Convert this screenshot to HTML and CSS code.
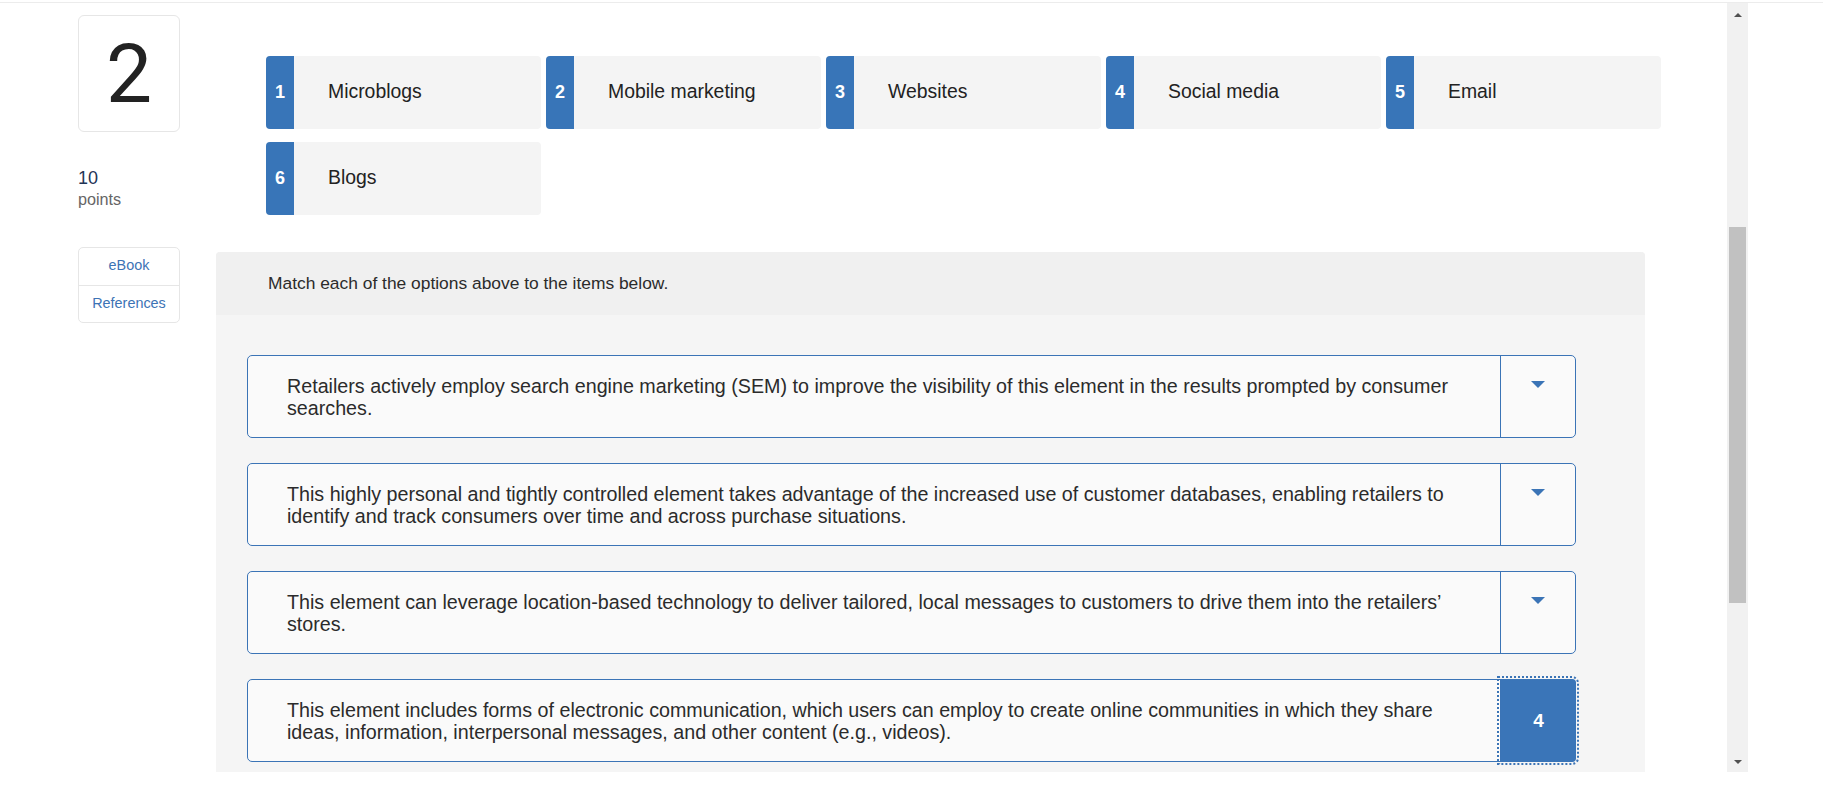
FILE: index.html
```html
<!DOCTYPE html>
<html lang="en">
<head>
<meta charset="utf-8">
<title>Matching question</title>
<link rel="stylesheet" href="styles.css">
</head>
<body>
<div class="topline"></div>
<div class="frame">
  <div class="content">
    <aside class="side">
      <div class="qnum">2</div>
      <div class="points">
        <div class="pts-val">10</div>
        <div class="pts-label">points</div>
      </div>
      <div class="links">
        <a class="link">eBook</a>
        <a class="link">References</a>
      </div>
    </aside>
    <main class="main">
      <div class="tiles">
        <div class="tile"><span class="tile-num">1</span><span class="tile-label">Microblogs</span></div>
        <div class="tile"><span class="tile-num">2</span><span class="tile-label">Mobile marketing</span></div>
        <div class="tile"><span class="tile-num">3</span><span class="tile-label">Websites</span></div>
        <div class="tile"><span class="tile-num">4</span><span class="tile-label">Social media</span></div>
        <div class="tile"><span class="tile-num">5</span><span class="tile-label">Email</span></div>
        <div class="tile"><span class="tile-num">6</span><span class="tile-label">Blogs</span></div>
      </div>
      <section class="panel">
        <div class="panel-head">Match each of the options above to the items below.</div>
        <div class="panel-body">
          <div class="row">
            <div class="row-text">Retailers actively employ search engine marketing (SEM) to improve the visibility of this element in the results prompted by consumer searches.</div>
            <div class="row-select"><svg class="caret" width="14" height="7" viewBox="0 0 14 7"><path d="M0 0H14L7 7Z" fill="#3b74b6"/></svg></div>
          </div>
          <div class="row">
            <div class="row-text">This highly personal and tightly controlled element takes advantage of the increased use of customer databases, enabling retailers to identify and track consumers over time and across purchase situations.</div>
            <div class="row-select"><svg class="caret" width="14" height="7" viewBox="0 0 14 7"><path d="M0 0H14L7 7Z" fill="#3b74b6"/></svg></div>
          </div>
          <div class="row">
            <div class="row-text">This element can leverage location-based technology to deliver tailored, local messages to customers to drive them into the retailers’ stores.</div>
            <div class="row-select"><svg class="caret" width="14" height="7" viewBox="0 0 14 7"><path d="M0 0H14L7 7Z" fill="#3b74b6"/></svg></div>
          </div>
          <div class="row">
            <div class="row-text">This element includes forms of electronic communication, which users can employ to create online communities in which they share ideas, information, interpersonal messages, and other content (e.g., videos).</div>
            <div class="row-select filled"><span class="chosen">4</span></div>
          </div>
        </div>
      </section>
    </main>
  </div>
  <div class="scrollbar">
    <div class="sb-btn"><span class="arrow-up"></span></div>
    <div class="sb-thumb"></div>
    <div class="sb-btn sb-bottom"><span class="arrow-down"></span></div>
  </div>
</div>
</body>
</html>
```

FILE: styles.css
```css
* { box-sizing: border-box; }

html, body {
  margin: 0;
  padding: 0;
  background: #ffffff;
}

body {
  font-family: "Liberation Sans", Arial, sans-serif;
  color: #2b2b2b;
  width: 1823px;
  height: 790px;
  overflow: hidden;
}

.topline {
  margin-top: 2px;
  height: 1px;
  background: #ececec;
}

.frame {
  display: flex;
  width: 1748px;
  height: 769px;
  overflow: hidden;
}

.content {
  width: 1727px;
  height: 769px;
  overflow: hidden;
  display: flex;
  align-items: flex-start;
  padding-left: 78px;
}

/* left column */
.side {
  width: 102px;
  flex: none;
  display: flex;
  flex-direction: column;
}

.qnum {
  margin-top: 12px;
  height: 117px;
  border: 1px solid #e6e6e6;
  border-radius: 6px;
  display: flex;
  align-items: center;
  justify-content: center;
  font-family: Roboto, "Liberation Sans", sans-serif;
  font-weight: 400;
  font-size: 82px;
  line-height: 1;
  color: #222222;
}

.points {
  margin-top: 36px;
}

.pts-val {
  font-size: 18px;
  line-height: 21px;
  color: #1f3456;
}

.pts-label {
  font-size: 16.2px;
  line-height: 20px;
  color: #666666;
}

.links {
  margin-top: 38px;
  border: 1px solid #e6e6e6;
  border-radius: 5px;
  display: flex;
  flex-direction: column;
}

.link {
  height: 37px;
  display: flex;
  align-items: center;
  justify-content: center;
  padding-bottom: 3px;
  font-size: 14.4px;
  color: #3d73b5;
}

.link + .link {
  border-top: 1px solid #e6e6e6;
}

/* main column */
.main {
  margin-left: 36px;
  width: 1429px;
  flex: none;
}

.tiles {
  margin-top: 53px;
  padding-left: 50px;
  display: grid;
  grid-template-columns: repeat(5, 275px);
  column-gap: 5px;
  row-gap: 13px;
  width: 1500px;
}

.tile {
  height: 73px;
  background: #f4f4f4;
  border-radius: 4px;
  display: flex;
  align-items: center;
  overflow: hidden;
}

.tile-num {
  width: 28px;
  height: 100%;
  flex: none;
  background: #3875b8;
  color: #ffffff;
  font-weight: 700;
  font-size: 18px;
  display: flex;
  align-items: center;
  justify-content: center;
}

.tile-label {
  padding-left: 34px;
  padding-bottom: 2px;
  font-size: 19.4px;
  color: #222222;
}

.panel {
  margin-top: 37px;
  background: #f5f5f5;
  border-radius: 4px 4px 0 0;
  height: 600px;
}

.panel-head {
  height: 63px;
  background: #f0f0f0;
  border-radius: 4px 4px 0 0;
  display: flex;
  align-items: center;
  padding-left: 52px;
  font-size: 17.4px;
  color: #2b2b2b;
}

.panel-body {
  padding: 40px 0 0 31px;
  display: flex;
  flex-direction: column;
  gap: 25px;
}

.row {
  width: 1329px;
  height: 83px;
  display: flex;
  border: 1px solid #3b74b6;
  border-radius: 5px;
  background: #fafafa;
}

.row-text {
  flex: 1;
  padding: 0 34px 0 39px;
  display: flex;
  align-items: center;
  font-size: 19.7px;
  line-height: 22px;
  color: #2b2b2b;
}

.row-select {
  width: 75px;
  flex: none;
  border-left: 1px solid #3b74b6;
  display: flex;
  justify-content: center;
  align-items: flex-start;
  padding-top: 25px;
}

.caret {
  display: block;
}

.row-select.filled {
  background: #3a75b8;
  border-radius: 0 4px 4px 0;
  align-items: center;
  padding-top: 0;
  margin: -1px -1px -1px 0;
  width: 76px;
  outline: 2px dotted #3b74b6;
  outline-offset: 1px;
}

.chosen {
  color: #ffffff;
  font-weight: 700;
  font-size: 19px;
}

/* custom scrollbar */
.scrollbar {
  width: 21px;
  flex: none;
  height: 769px;
  background: #f1f1f1;
  display: flex;
  flex-direction: column;
  align-items: center;
}

.sb-btn {
  height: 17px;
  width: 21px;
  display: flex;
  align-items: center;
  justify-content: center;
  flex: none;
}

.sb-bottom {
  margin-top: auto;
}

.arrow-up {
  width: 0;
  height: 0;
  border-left: 4px solid transparent;
  border-right: 4px solid transparent;
  border-bottom: 4px solid #505050;
  margin-top: 7px;
}

.arrow-down {
  width: 0;
  height: 0;
  border-left: 4px solid transparent;
  border-right: 4px solid transparent;
  border-top: 4px solid #505050;
  margin-bottom: 4px;
}

.sb-thumb {
  margin-top: 207px;
  width: 17px;
  height: 376px;
  background: #c1c1c1;
  flex: none;
}
```
